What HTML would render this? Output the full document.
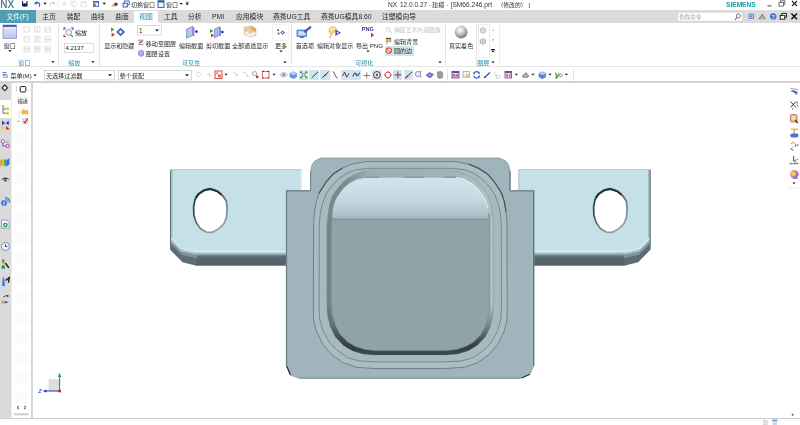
<!DOCTYPE html>
<html><head><meta charset="utf-8"><title>NX 12.0.0.27</title>
<style>
html,body{margin:0;padding:0;background:#fff;}
body{width:800px;height:425px;overflow:hidden;position:relative;font-family:"Liberation Sans",sans-serif;}
#ov{position:absolute;left:0;top:0;width:800px;height:425px;filter:blur(0.3px);}
text{font-family:"Liberation Sans","Noto Sans CJK SC",sans-serif;}
.bg{position:absolute;}
</style></head><body>
<div class="bg" style="left:0px;top:9.6px;width:800px;height:13.2px;background:#dbdbdb;"></div>
<div class="bg" style="left:0px;top:9.6px;width:36px;height:13.2px;background:#4d9db3;"></div>
<div class="bg" style="left:134px;top:10.8px;width:24px;height:12.2px;background:#ffffff;"></div>
<div class="bg" style="left:0px;top:66px;width:800px;height:1px;background:#e6e6e6;"></div>
<div class="bg" style="left:0px;top:81.2px;width:800px;height:1.8px;background:#d4d4d4;"></div>
<div class="bg" style="left:0px;top:83px;width:10.6px;height:336px;background:#dadada;"></div>
<div class="bg" style="left:0px;top:100px;width:10.6px;height:17.6px;background:#ffffff;"></div>
<div class="bg" style="left:10.8px;top:83px;width:0.8px;height:336px;background:#ececec;"></div>
<div class="bg" style="left:31.4px;top:83px;width:1.8px;height:336px;background:#d6d6d6;"></div>
<div class="bg" style="left:0px;top:418px;width:800px;height:1px;background:#cccccc;"></div>
<div class="bg" style="left:58px;top:24px;width:1px;height:42px;background:#e4e4e4;"></div>
<div class="bg" style="left:98.5px;top:24px;width:1px;height:42px;background:#e4e4e4;"></div>
<div class="bg" style="left:291px;top:24px;width:1px;height:40px;background:#e4e4e4;"></div>
<div class="bg" style="left:384.5px;top:46px;width:29px;height:9.6px;background:#cfe6ee;"></div>
<div class="bg" style="left:445px;top:24px;width:1px;height:42px;background:#e4e4e4;"></div>
<div class="bg" style="left:476px;top:24px;width:1px;height:42px;background:#e4e4e4;"></div>
<div class="bg" style="left:491.4px;top:49.3px;width:3.2px;height:0.7px;background:#222;"></div>
<div class="bg" style="left:499px;top:24px;width:1px;height:42px;background:#ececec;"></div>
<div class="bg" style="left:447px;top:69px;width:1px;height:12px;background:#e2e2e2;"></div>
<div class="bg" style="left:573px;top:69px;width:1px;height:12px;background:#e2e2e2;"></div>
<div class="bg" style="left:299px;top:70px;width:9.4px;height:9.6px;background:#cfe6ee;"></div>
<div class="bg" style="left:309.4px;top:70px;width:9.6px;height:9.6px;background:#cfe6ee;"></div>
<div class="bg" style="left:320px;top:70px;width:9.6px;height:9.6px;background:#cfe6ee;"></div>
<div class="bg" style="left:341px;top:70px;width:9.5px;height:9.6px;background:#cfe6ee;"></div>
<div class="bg" style="left:351px;top:70px;width:9.8px;height:9.6px;background:#cfe6ee;"></div>
<div class="bg" style="left:372px;top:70px;width:9.8px;height:9.6px;background:#cfe6ee;"></div>
<div class="bg" style="left:393px;top:70px;width:9px;height:9.6px;background:#cfe6ee;"></div>
<div class="bg" style="left:404px;top:70px;width:9.3px;height:9.6px;background:#cfe6ee;"></div>
<svg id="ov" width="800" height="425" viewBox="0 0 800 425">
<defs><linearGradient id="gside" x1="0" y1="0" x2="0" y2="1"><stop offset="0" stop-color="#d6e9ed"/><stop offset="0.1" stop-color="#c0d5da"/><stop offset="0.2" stop-color="#9bb0b6"/><stop offset="0.32" stop-color="#6b7e84"/><stop offset="0.42" stop-color="#58696f"/><stop offset="1" stop-color="#4f6066"/></linearGradient><linearGradient id="gtop" x1="0" y1="0" x2="0" y2="1"><stop offset="0" stop-color="#d0e6ec"/><stop offset="0.5" stop-color="#c5dbe1"/><stop offset="0.8" stop-color="#b3c9cf"/><stop offset="1" stop-color="#a3b8be"/></linearGradient><linearGradient id="ghole" x1="0.1" y1="0" x2="0.75" y2="1"><stop offset="0" stop-color="#25353b"/><stop offset="0.35" stop-color="#3a4b51"/><stop offset="0.6" stop-color="#687c82"/><stop offset="1" stop-color="#93a7ad"/></linearGradient><linearGradient id="gcx" gradientUnits="userSpaceOnUse" x1="326.8" y1="0" x2="493.8" y2="0"><stop offset="0" stop-color="#687b81"/><stop offset="0.014" stop-color="#6f8288"/><stop offset="0.03" stop-color="#86999f"/><stop offset="0.5" stop-color="#909fa5"/><stop offset="0.96" stop-color="#b1c5ca"/><stop offset="1" stop-color="#aabec4"/></linearGradient><linearGradient id="gcy" gradientUnits="userSpaceOnUse" x1="0" y1="304" x2="0" y2="352"><stop offset="0" stop-color="#2f3d43" stop-opacity="0"/><stop offset="0.4" stop-color="#2f3d43" stop-opacity="0.4"/><stop offset="0.75" stop-color="#2f3d43" stop-opacity="0.85"/><stop offset="0.92" stop-color="#2f3d43" stop-opacity="1"/><stop offset="1" stop-color="#3b4a50" stop-opacity="1"/></linearGradient><linearGradient id="gwall" gradientUnits="userSpaceOnUse" x1="326" y1="0" x2="494.6" y2="0"><stop offset="0" stop-color="#72868c"/><stop offset="0.12" stop-color="#788c92"/><stop offset="0.26" stop-color="#9bafb5"/><stop offset="0.75" stop-color="#9fb3b9"/><stop offset="0.88" stop-color="#aabec4"/><stop offset="1" stop-color="#b0c4ca"/></linearGradient><linearGradient id="gwin" x1="0" y1="0" x2="0" y2="1"><stop offset="0" stop-color="#e9effa"/><stop offset="1" stop-color="#b9c1ea"/></linearGradient><radialGradient id="gsph" cx="0.4" cy="0.3" r="0.7"><stop offset="0" stop-color="#ffffff"/><stop offset="0.45" stop-color="#cfcfcf"/><stop offset="1" stop-color="#777"/></radialGradient><linearGradient id="gnx" x1="0" y1="0" x2="0" y2="1"><stop offset="0" stop-color="#7f9bb0"/><stop offset="1" stop-color="#4d6f88"/></linearGradient></defs>
<text x="0.2" y="7.6" font-size="10" font-weight="bold" fill="#64819a">NX</text>
<text x="131" y="7.2" font-size="6" fill="#2a2a2a">切换窗口</text>
<text x="166" y="7.2" font-size="6" fill="#2a2a2a">窗口</text>
<text x="388" y="7.2" font-size="6.6" fill="#333">NX</text>
<text x="400" y="7.2" font-size="6.5" fill="#333">12.0.0.27</text>
<text x="428.6" y="7.2" font-size="6.2" fill="#333">-</text>
<text x="432" y="7.2" font-size="6.2" fill="#333">建模</text>
<text x="446.4" y="7.2" font-size="6.2" fill="#333">-</text>
<text x="450.6" y="7.2" font-size="6.6" fill="#333">[SM66.246.prt</text>
<text x="497.5" y="7.2" font-size="5.8" fill="#333">（修改的）</text>
<text x="528.2" y="7.2" font-size="6.2" fill="#333">]</text>
<text x="726" y="6.7" font-size="6.6" font-weight="bold" fill="#0a9c9c">SIEMENS</text>
<text x="6.5" y="19.2" font-size="6.8" fill="#ffffff">文件(F)</text>
<text x="42.3" y="19.2" font-size="6.8" fill="#2a2a2a">主页</text>
<text x="66.8" y="19.2" font-size="6.8" fill="#2a2a2a">装配</text>
<text x="91" y="19.2" font-size="6.8" fill="#2a2a2a">曲线</text>
<text x="115.2" y="19.2" font-size="6.8" fill="#2a2a2a">曲面</text>
<text x="164" y="19.2" font-size="6.8" fill="#2a2a2a">工具</text>
<text x="188" y="19.2" font-size="6.8" fill="#2a2a2a">分析</text>
<text x="212" y="19.2" font-size="6.8" fill="#2a2a2a">PMI</text>
<text x="236" y="19.2" font-size="6.8" fill="#2a2a2a">应用模块</text>
<text x="273" y="19.2" font-size="6.8" fill="#2a2a2a">燕秀UG工具</text>
<text x="321" y="19.2" font-size="6.8" fill="#2a2a2a">燕秀UG模具8.60</text>
<text x="382" y="19.2" font-size="6.8" fill="#2a2a2a">注塑模向导</text>
<text x="139.3" y="19.2" font-size="6.8" fill="#2b8fad">视图</text>
<rect x="677.5" y="12.3" width="65" height="9" rx="1" fill="#fff" stroke="#c9c9c9" stroke-width="0.6"/>
<text x="679" y="19" font-size="5.6" fill="#9a9a9a">查找命令</text>
<text x="3.8" y="47.6" font-size="6.05" fill="#2a2a2a">窗口</text>
<path d="M8.28 50.20 h3.45 l-1.72 1.90 z" fill="#111" stroke="none" stroke-width="1" />
<text x="18.2" y="65.1" font-size="6.05" fill="#2b8fad">窗口</text>
<path d="M51.39 61.20 h3.22 l-1.61 1.77 z" fill="#111" stroke="none" stroke-width="1" />
<text x="75" y="34.7" font-size="6.05" fill="#2a2a2a">缩放</text>
<rect x="64.3" y="43.4" width="29.5" height="9.2" fill="#fff" stroke="#c4c4c4" stroke-width="0.6"/>
<text x="65.4" y="50.4" font-size="6" fill="#222">4.2137</text>
<text x="68.3" y="65.1" font-size="6.05" fill="#2b8fad">缩放</text>
<path d="M91.39 61.20 h3.22 l-1.61 1.77 z" fill="#111" stroke="none" stroke-width="1" />
<text x="104.2" y="47.6" font-size="6.05" fill="#2a2a2a">显示和隐藏</text>
<rect x="137.4" y="25.6" width="24" height="9.4" fill="#fff" stroke="#c4c4c4" stroke-width="0.6"/>
<text x="139" y="32.9" font-size="6.4" fill="#222">1</text>
<path d="M155.04 29.40 h3.91 l-1.95 2.15 z" fill="#111" stroke="none" stroke-width="1" />
<text x="145.8" y="45.9" font-size="6.05" fill="#2a2a2a">移动至图层</text>
<text x="145.8" y="56.2" font-size="6.05" fill="#2a2a2a">图层设置</text>
<text x="179" y="47.6" font-size="6.05" fill="#2a2a2a">编辑截面</text>
<text x="206" y="47.6" font-size="6.05" fill="#2a2a2a">剪切截面</text>
<text x="232" y="47.6" font-size="6.05" fill="#2a2a2a">全部通透显示</text>
<rect x="272.4" y="24.3" width="16.6" height="16" rx="1" fill="#fff" stroke="#e2e2e2" stroke-width="0.6"/>
<text x="275" y="47.6" font-size="6.05" fill="#2a2a2a">更多</text>
<path d="M279.39 50.40 h3.22 l-1.61 1.77 z" fill="#111" stroke="none" stroke-width="1" />
<text x="182" y="65.1" font-size="6.05" fill="#2b8fad">可见性</text>
<path d="M283.39 61.40 h3.22 l-1.61 1.77 z" fill="#111" stroke="none" stroke-width="1" />
<text x="295.8" y="47.6" font-size="6.05" fill="#2a2a2a">首选项</text>
<text x="317" y="47.6" font-size="6.05" fill="#2a2a2a">编辑对象显示</text>
<text x="356" y="47.6" font-size="6.05" fill="#2a2a2a">导出 PNG</text>
<path d="M366.39 50.40 h3.22 l-1.61 1.77 z" fill="#111" stroke="none" stroke-width="1" />
<text x="361.8" y="31.2" font-size="5.6" font-weight="bold" fill="#3a2f8c">PNG</text>
<path d="M371 32.8 l3.2 2.3 l-3.2 2.3z" fill="#c0279c" stroke="none" stroke-width="1" />
<text x="394" y="32.2" font-size="5.85" fill="#c4c4c4">捕捉艺术外观图像</text>
<text x="394" y="43.6" font-size="6.05" fill="#2a2a2a">编辑背景</text>
<text x="394" y="53.3" font-size="6.05" fill="#2a2a2a">圆的边</text>
<text x="355.2" y="65.1" font-size="6.05" fill="#2b8fad">可视化</text>
<path d="M438.39 61.40 h3.22 l-1.61 1.77 z" fill="#111" stroke="none" stroke-width="1" />
<text x="449" y="47.6" font-size="6.05" fill="#2a2a2a">真实着色</text>
<rect x="478.3" y="24.4" width="11" height="33" fill="#fff" stroke="#e0e0e0" stroke-width="0.6"/>
<text x="477.2" y="65.1" font-size="6.05" fill="#2b8fad">图层</text>
<path d="M491.39 61.40 h3.22 l-1.61 1.77 z" fill="#111" stroke="none" stroke-width="1" />
<path d="M491.16 50.60 h3.68 l-1.84 2.02 z" fill="#111" stroke="none" stroke-width="1" />
<path d="M491.9 30.6 l1.1 -1.2 l1.1 1.2z" fill="#777" stroke="none" stroke-width="1" />
<path d="M491.9 39.6 l1.1 1.2 l1.1 -1.2z" fill="#777" stroke="none" stroke-width="1" />
<text x="10.5" y="77.6" font-size="6.05" fill="#2a2a2a">菜单(M)</text>
<path d="M33.39 74.40 h3.22 l-1.61 1.77 z" fill="#111" stroke="none" stroke-width="1" />
<rect x="44.3" y="70.3" width="70.3" height="9.6" fill="#fff" stroke="#bdbdbd" stroke-width="0.6"/>
<text x="46" y="77.6" font-size="6.05" fill="#2a2a2a">无选择过滤器</text>
<path d="M108.05 74.20 h3.91 l-1.95 2.15 z" fill="#111" stroke="none" stroke-width="1" />
<rect x="118.2" y="70.3" width="73.3" height="9.6" fill="#fff" stroke="#bdbdbd" stroke-width="0.6"/>
<text x="119.8" y="77.6" font-size="6.05" fill="#2a2a2a">整个装配</text>
<path d="M185.04 74.20 h3.91 l-1.95 2.15 z" fill="#111" stroke="none" stroke-width="1" />
<rect x="196.00" y="251" width="104.00" height="14.7" fill="url(#gside)"/>
<path d="M170.20 238.00 L181.00 249.00 L197.00 252.40 L196.50 265.70 L182.50 262.30 L170.40 250.00Z" fill="#5c6d73" stroke="none" stroke-width="0" />
<path d="M170.20 238.00 L181.00 249.00 L197.00 252.40 L196.80 258.20 L181.70 254.80 L170.30 243.40Z" fill="#80959b" stroke="none" stroke-width="0" />
<path d="M170.20 238.00 L181.00 249.00 L197.00 252.40 L197.00 254.40 L181.20 251.20 L170.20 240.20Z" fill="#b7ccd1" stroke="none" stroke-width="0" />
<path d="M170.00 169.40 L302.00 169.40 L302.00 251.00 L200.00 251.00 L190.00 250.40 L181.00 248.00 L170.00 237.00Z" fill="#c6e0e7" stroke="none" stroke-width="0" />
<path d="M170.40 237 L181.00 248.2 L190.00 250.8 L200.00 251.4 L300.00 251.4" fill="none" stroke="#d9edf1" stroke-width="1.1" />
<rect x="170.00" y="169.6" width="2.60" height="68" fill="#a7bfc5"/>
<line x1="170.5" y1="170.5" x2="170.5" y2="249.5" stroke="#5f777d" stroke-width="1.1" />
<line x1="170" y1="169.6" x2="302" y2="169.6" stroke="#a5bec5" stroke-width="0.7" />
<rect x="300.2" y="169.6" width="1.8" height="21.4" fill="#dcedf1"/>
<rect x="520.60" y="251" width="104.00" height="14.7" fill="url(#gside)"/>
<path d="M650.40 238.00 L639.60 249.00 L623.60 252.40 L624.10 265.70 L638.10 262.30 L650.20 250.00Z" fill="#5c6d73" stroke="none" stroke-width="0" />
<path d="M650.40 238.00 L639.60 249.00 L623.60 252.40 L623.80 258.20 L638.90 254.80 L650.30 243.40Z" fill="#80959b" stroke="none" stroke-width="0" />
<path d="M650.40 238.00 L639.60 249.00 L623.60 252.40 L623.60 254.40 L639.40 251.20 L650.40 240.20Z" fill="#b7ccd1" stroke="none" stroke-width="0" />
<path d="M650.60 169.40 L518.60 169.40 L518.60 251.00 L620.60 251.00 L630.60 250.40 L639.60 248.00 L650.60 237.00Z" fill="#c6e0e7" stroke="none" stroke-width="0" />
<path d="M650.20 237 L639.60 248.2 L630.60 250.8 L620.60 251.4 L520.60 251.4" fill="none" stroke="#d9edf1" stroke-width="1.1" />
<rect x="648.00" y="169.6" width="2.60" height="68" fill="#a7bfc5"/>
<line x1="650.1" y1="170.5" x2="650.1" y2="249.5" stroke="#5f777d" stroke-width="1.1" />
<line x1="650.6" y1="169.6" x2="518.6" y2="169.6" stroke="#a5bec5" stroke-width="0.7" />
<line x1="518.8" y1="169.6" x2="518.8" y2="191" stroke="#9fb8bf" stroke-width="0.8" />
<path d="M210.35 188.90 L217.40 191.30 L223.10 196.20 L226.40 201.20 L227.10 208.20 L226.50 217.40 L223.80 223.80 L218.80 228.70 L211.80 232.40 L206.10 232.00 L200.50 228.70 L196.20 222.40 L193.90 215.30 L193.60 206.80 L194.90 199.80 L198.40 194.10 L204.00 190.30Z" fill="#ffffff" stroke="url(#ghole)" stroke-width="1.7" stroke-linejoin="round"/>
<path d="M196.30 197.20 L198.40 194.10 L204.00 190.30 L210.35 188.90 L217.40 191.30 L221.00 194.30" fill="none" stroke="#26363c" stroke-width="2.1" stroke-linejoin="round" stroke-linecap="round"/>
<path d="M610.35 188.90 L617.40 191.30 L623.10 196.20 L626.40 201.20 L627.10 208.20 L626.50 217.40 L623.80 223.80 L618.80 228.70 L611.80 232.40 L606.10 232.00 L600.50 228.70 L596.20 222.40 L593.90 215.30 L593.60 206.80 L594.90 199.80 L598.40 194.10 L604.00 190.30Z" fill="#ffffff" stroke="url(#ghole)" stroke-width="1.7" stroke-linejoin="round"/>
<path d="M596.30 197.20 L598.40 194.10 L604.00 190.30 L610.35 188.90 L617.40 191.30 L621.00 194.30" fill="none" stroke="#26363c" stroke-width="2.1" stroke-linejoin="round" stroke-linecap="round"/>
<path d="M310.5 190.6 L310.5 171.5 L312 164.6 L315 160.8 L321 158 L499.60 158 L505.60 160.8 L508.60 164.6 L510.10 171.5 L510.10 190.6 L534 190.6 L534 365.5 L530.1 373.8 L520.5 378.3 L299.5 378.3 L290.1 375 L286.25 365.5 L286.25 190.6Z" fill="#a0b4bb" stroke="#7f949a" stroke-width="0.7" stroke-linejoin="round"/>
<line x1="286.3" y1="190.9" x2="310.5" y2="190.9" stroke="#62777d" stroke-width="0.9" />
<line x1="534" y1="190.9" x2="510.1" y2="190.9" stroke="#62777d" stroke-width="0.9" />
<line x1="310.6" y1="171" x2="310.6" y2="190.6" stroke="#6a8086" stroke-width="0.9" />
<line x1="510.0" y1="171" x2="510.0" y2="190.6" stroke="#5f757b" stroke-width="1.1" />
<line x1="286.6" y1="190.6" x2="286.6" y2="365.5" stroke="#6a7f85" stroke-width="1.1" />
<line x1="533.6" y1="190.6" x2="533.6" y2="365.5" stroke="#62767c" stroke-width="1.2" />
<line x1="299.5" y1="378.1" x2="520.5" y2="378.1" stroke="#7b8f95" stroke-width="0.8" />
<line x1="286.8" y1="366" x2="290.3" y2="374.8" stroke="#26343a" stroke-width="1.2" />
<line x1="530" y1="374.2" x2="521.5" y2="378" stroke="#26343a" stroke-width="1.1" />
<path d="M365.00 161.60 L351.60 164.20 L341.70 168.40 L333.20 174.00 L326.20 181.80 L319.10 193.10 L316.30 201.60 L314.70 211.00 L313.65 223.00 L313.40 305.00 L313.60 319.80 L316.50 331.40 L323.10 344.50 L331.40 354.40 L342.90 362.70 L356.10 367.30 L375.00 368.50 L445.60 368.50 L464.50 367.30 L477.70 362.70 L489.20 354.40 L497.50 344.50 L504.10 331.40 L507.00 319.80 L507.20 305.00 L506.95 223.00 L505.90 211.00 L504.30 201.60 L501.50 193.10 L494.40 181.80 L487.40 174.00 L478.90 168.40 L469.00 164.20 L455.60 161.60Z" fill="#a9bdc3" stroke="#6f848a" stroke-width="1.0" stroke-linejoin="round"/>
<path d="M341.70 168.40 L333.20 174.00 L326.20 181.80 L319.10 193.10" fill="none" stroke="#44575d" stroke-width="1.2" stroke-linecap="round"/>
<path d="M469.00 164.20 L478.90 168.40 L487.40 174.00 L494.40 181.80 L501.50 193.10 L504.30 201.60 L505.90 211.00" fill="none" stroke="#44575d" stroke-width="1.2" stroke-linecap="round"/>
<path d="M368.00 168.30 L355.80 169.80 L347.40 173.00 L338.90 178.60 L331.10 186.80 L326.20 193.80 L322.60 203.00 L320.30 213.00 L319.30 225.00 L319.10 305.00 L319.50 318.20 L323.10 331.40 L329.70 342.90 L337.90 351.10 L347.80 357.70 L359.40 361.00 L375.00 361.80 L445.60 361.80 L461.20 361.00 L472.80 357.70 L482.70 351.10 L490.90 342.90 L497.50 331.40 L501.10 318.20 L501.50 305.00 L501.30 225.00 L500.30 213.00 L498.00 203.00 L494.40 193.80 L489.50 186.80 L481.70 178.60 L473.20 173.00 L464.80 169.80 L452.60 168.30Z" fill="#a6bac0" stroke="#768b91" stroke-width="1.0" stroke-linejoin="round"/>
<path d="M378.00 169.00 L365.00 171.20 L354.40 174.80 L345.90 179.70 L338.90 186.80 L332.50 195.90 L329.70 204.40 L328.10 215.00 L326.90 226.00 L326.80 305.00 L327.40 314.90 L330.20 326.40 L335.20 336.80 L343.50 345.50 L352.30 350.80 L362.70 354.00 L375.00 355.00 L445.60 355.00 L457.90 354.00 L468.30 350.80 L477.10 345.50 L485.40 336.80 L490.40 326.40 L493.20 314.90 L493.80 305.00 L493.70 226.00 L492.50 215.00 L490.90 204.40 L488.10 195.90 L481.70 186.80 L474.70 179.70 L466.20 174.80 L455.60 171.20 L442.60 169.00Z" fill="url(#gcx)" stroke="#8a9fa5" stroke-width="0.5" />
<path d="M378.00 169.00 L365.00 171.20 L354.40 174.80 L345.90 179.70 L338.90 186.80 L332.50 195.90 L329.70 204.40 L328.10 215.00 L326.90 226.00 L326.80 305.00 L327.40 314.90 L330.20 326.40 L335.20 336.80 L343.50 345.50 L352.30 350.80 L362.70 354.00 L375.00 355.00 L445.60 355.00 L457.90 354.00 L468.30 350.80 L477.10 345.50 L485.40 336.80 L490.40 326.40 L493.20 314.90 L493.80 305.00 L493.70 226.00 L492.50 215.00 L490.90 204.40 L488.10 195.90 L481.70 186.80 L474.70 179.70 L466.20 174.80 L455.60 171.20 L442.60 169.00Z" fill="url(#gcy)" stroke="none" stroke-width="1" />
<path d="M378.00 169.00 L365.00 171.20 L354.40 174.80 L345.90 179.70 L338.90 186.80 L332.50 195.90 L329.70 204.40 L328.10 215.00 L326.90 226.00 L493.70 226.00 L492.50 215.00 L490.90 204.40 L488.10 195.90 L481.70 186.80 L474.70 179.70 L466.20 174.80 L455.60 171.20 L442.60 169.00Z" fill="url(#gwall)" stroke="none" stroke-width="1" />
<path d="M365.00 171.20 L354.40 174.80 L345.90 179.70 L338.90 186.80 L332.50 195.90 L329.70 204.40 L328.10 215.00 L326.90 226.00" fill="none" stroke="#83989e" stroke-width="0.6" />
<path d="M455.60 171.20 L466.20 174.80 L474.70 179.70 L481.70 186.80 L488.10 195.90 L490.90 204.40 L492.50 215.00 L493.70 226.00" fill="none" stroke="#8a9fa5" stroke-width="0.6" />
<path d="M331.40 214.00 L331.50 305.00 L332.30 314.50 L335.40 325.60 L340.20 334.60 L347.60 342.00 L355.40 346.60 L364.60 349.60 L376.00 350.70 L445.20 350.70 L456.60 349.60 L465.80 346.60 L473.60 342.00 L481.00 334.60 L485.80 325.60 L488.90 314.50 L489.70 305.00 L489.80 214.00Z" fill="#8fa3a9" stroke="#6c7f85" stroke-width="0.5" stroke-linejoin="round"/>
<path d="M334.50 219.20 L332.40 217.00 L332.80 208.00 L335.00 200.50 L337.30 196.50 L343.00 188.50 L349.50 183.00 L357.50 178.80 L365.00 177.60 L455.60 177.60 L463.10 178.80 L471.10 183.00 L477.60 188.50 L483.30 196.50 L485.60 200.50 L487.80 208.00 L488.20 217.00 L486.10 219.20Z" fill="url(#gtop)" stroke="none" stroke-width="0" />
<path d="M487.80 208.00 L485.60 200.50 L483.30 196.50 L477.60 188.50 L471.10 183.00 L463.10 178.80 L455.60 177.60" fill="none" stroke="#e6f2f5" stroke-width="0.9" />
<path d="M332.80 208.00 L335.00 200.50 L337.30 196.50 L343.00 188.50 L349.50 183.00 L357.50 178.80 L365.00 177.60" fill="none" stroke="#7f949a" stroke-width="0.5" />
<line x1="365" y1="177.3" x2="455.6" y2="177.3" stroke="#9db2b8" stroke-width="0.7" />
<line x1="365" y1="177.2" x2="455.6" y2="177.2" stroke="#6f848a" stroke-width="0.8" stroke-dasharray="14 25 20 20 12 100"/>
<line x1="332" y1="219.3" x2="488.6" y2="219.3" stroke="#798d93" stroke-width="1.1" />
<line x1="18.5" y1="0.5" x2="18.5" y2="9" stroke="#ececec" stroke-width="0.7" />
<g transform="translate(22 1) scale(1)"><rect x="0" y="0" width="5.6" height="5.4" fill="#1b2d6e" stroke="none" stroke-width="1" rx="0"/><rect x="1.1" y="0" width="3.3" height="2.3" fill="#ffffff" stroke="none" stroke-width="1" rx="0"/><rect x="1.5" y="3.6" width="2.6" height="1.8" fill="#0d173d" stroke="none" stroke-width="1" rx="0"/></g>
<g transform="translate(33.8 1.2) scale(1)"><path d="M5.6 5 C6.6 2.2 4.6 0.6 2.2 1.6" fill="none" stroke="#2f6fd3" stroke-width="1.3" stroke-linecap="round"/><path d="M0 2.4 L3 0 L3.2 3.6Z" fill="#2f6fd3" stroke="none" stroke-width="1" /></g>
<path d="M43.27 2.80 h3.45 l-1.72 1.90 z" fill="#111" stroke="none" stroke-width="1" />
<g transform="translate(50 1.2) scale(1)"><path d="M0.4 5 C-0.6 2.2 1.4 0.6 3.8 1.6" fill="none" stroke="#d2d2d2" stroke-width="1.1" stroke-linecap="round"/><path d="M6 2.4 L3 0 L2.8 3.6Z" fill="#d2d2d2" stroke="none" stroke-width="1" /></g>
<line x1="58.3" y1="0.5" x2="58.3" y2="9" stroke="#e6e6e6" stroke-width="0.7" />
<g transform="translate(62 1.5) scale(1)"><path d="M2.2 0 V4.6 M0 2.3 H4.4" fill="none" stroke="#dcdcdc" stroke-width="1" /></g>
<g transform="translate(71 1) scale(1)"><rect x="0" y="0" width="3.4" height="4.2" fill="none" stroke="#dedede" stroke-width="0.8" rx="0"/><rect x="1.8" y="1.6" width="3.4" height="4.2" fill="#fff" stroke="#dedede" stroke-width="0.8" rx="0"/></g>
<g transform="translate(81 1) scale(1)"><rect x="0" y="1.2" width="5" height="4.6" fill="none" stroke="#dedede" stroke-width="0.8" rx="0"/><rect x="1.4" y="0" width="2.4" height="1.6" fill="#e4e4e4" stroke="none" stroke-width="1" rx="0"/></g>
<g transform="translate(93 1) scale(1)"><rect x="0" y="0" width="6" height="6" fill="#3c5fc0" stroke="none" stroke-width="1" rx="0"/><rect x="0.8" y="1.6" width="4.4" height="3.6" fill="#eef1fb" stroke="none" stroke-width="1" rx="0"/><rect x="0.8" y="2.6" width="2" height="2.6" fill="#d9534a" stroke="none" stroke-width="1" rx="0"/></g>
<path d="M102.48 2.80 h3.45 l-1.72 1.90 z" fill="#111" stroke="none" stroke-width="1" />
<g transform="translate(111.5 1.5) scale(1)"><path d="M0 4.5 L3 1 L6.5 3.4 L3 5.2Z" fill="#e9a23c" stroke="none" stroke-width="1" /><circle cx="4.6" cy="2.6" r="1.6" fill="#2d3fa5" stroke="none" stroke-width="1"/></g>
<g transform="translate(123 1) scale(1)"><rect x="1.6" y="0" width="4.6" height="3.8" fill="#fff" stroke="#3558b8" stroke-width="0.9" rx="0"/><rect x="0" y="2.2" width="4.4" height="3.8" fill="#e8eefc" stroke="#3558b8" stroke-width="0.9" rx="0"/></g>
<g transform="translate(158 0.8) scale(1)"><rect x="0" y="0" width="6" height="6.6" fill="#eef2fc" stroke="#2f4fb0" stroke-width="0.9" rx="0"/><rect x="0" y="0" width="6" height="1.6" fill="#2f4fb0" stroke="none" stroke-width="1" rx="0"/></g>
<path d="M179.59 3.00 h3.22 l-1.61 1.77 z" fill="#111" stroke="none" stroke-width="1" />
<path d="M185.47 3.30 h3.45 l-1.72 1.90 z" fill="#111" stroke="none" stroke-width="1" />
<line x1="185.8" y1="2.2" x2="188.6" y2="2.2" stroke="#222" stroke-width="0.7" />
<line x1="767.5" y1="5.9" x2="771.5" y2="5.9" stroke="#333" stroke-width="0.9" />
<g transform="translate(779 0.8) scale(1)"><rect x="1.5" y="0" width="4.4" height="3.6" fill="none" stroke="#555" stroke-width="0.8" rx="0"/><rect x="0" y="1.7" width="4.4" height="3.6" fill="#fff" stroke="#555" stroke-width="0.8" rx="0"/></g>
<g transform="translate(792 1) scale(1)"><path d="M0 0 L5 5 M5 0 L0 5" fill="none" stroke="#222" stroke-width="1.1" /></g>
<g transform="translate(735 13.5) scale(1)"><circle cx="3.4" cy="2.4" r="2" fill="none" stroke="#666" stroke-width="0.9"/><path d="M2 4 L0 6.4" fill="none" stroke="#666" stroke-width="1.1" /></g>
<g transform="translate(747.6 12.6) scale(1)"><rect x="0" y="0" width="7.4" height="7.6" fill="#e9e9e9" stroke="#c9c9c9" stroke-width="0.6" rx="1"/><rect x="1.6" y="1.6" width="4.2" height="4.2" fill="none" stroke="#3d6fcf" stroke-width="0.9" rx="0"/><rect x="2.8" y="2.8" width="1.8" height="1.8" fill="#3d6fcf" stroke="none" stroke-width="1" rx="0"/></g>
<g transform="translate(759 13.6) scale(1)"><path d="M0 5.6 L3.2 1 L6.4 5.6" fill="none" stroke="#7a7a7a" stroke-width="1.1" /><path d="M1.8 5.6 L3.2 3.6 L4.6 5.6" fill="none" stroke="#7a7a7a" stroke-width="0.8" /></g>
<g transform="translate(770 13) scale(1)"><circle cx="3.2" cy="3.4" r="3.2" fill="#2f63d6" stroke="none" stroke-width="1"/><circle cx="3.2" cy="3.4" r="3.2" fill="none" stroke="#9cb8f0" stroke-width="0.5"/><text x="3.2" y="5.6" font-size="5.6" font-weight="bold" fill="#fff" text-anchor="middle">?</text></g>
<g transform="translate(780.2 13.4) scale(1)"><rect x="1.6" y="0" width="4.6" height="3.8" fill="#fff" stroke="#222" stroke-width="1" rx="0"/><rect x="0" y="2" width="4.6" height="3.8" fill="#fff" stroke="#222" stroke-width="1" rx="0"/></g>
<g transform="translate(791.4 13.4) scale(1)"><path d="M0 0 L5.6 5.8 M5.6 0 L0 5.8" fill="none" stroke="#111" stroke-width="1.5" /></g>
<g transform="translate(3 25) scale(1)"><rect x="0" y="0" width="13.4" height="13.4" fill="url(#gwin)" stroke="#7e8fd0" stroke-width="0.7" rx="0"/><rect x="0" y="0" width="13.4" height="1.8" fill="#3b55a8" stroke="none" stroke-width="1" rx="0"/></g>
<g transform="translate(24.0 26.8) scale(1)"><rect x="0" y="0" width="5.6" height="5.2" fill="#fbfbfb" stroke="#cfcfcf" stroke-width="0.6" rx="0"/></g>
<g transform="translate(34.4 26.8) scale(1)"><rect x="0" y="0" width="5.6" height="5.2" fill="#fbfbfb" stroke="#cfcfcf" stroke-width="0.6" rx="0"/><path d="M2.8 0 V5.2" fill="none" stroke="#cfcfcf" stroke-width="0.6" /></g>
<g transform="translate(44.8 26.8) scale(1)"><rect x="0" y="0" width="5.6" height="5.2" fill="#fbfbfb" stroke="#cfcfcf" stroke-width="0.6" rx="0"/><path d="M0 2.6 H5.6" fill="none" stroke="#cfcfcf" stroke-width="0.6" /></g>
<g transform="translate(24.0 36.8) scale(1)"><rect x="0" y="0" width="5.6" height="5.2" fill="#fbfbfb" stroke="#cfcfcf" stroke-width="0.6" rx="0"/><path d="M2.8 1 V4.2" fill="none" stroke="#d6d6d6" stroke-width="0.6" /></g>
<g transform="translate(34.4 36.8) scale(1)"><rect x="0" y="0" width="5.6" height="5.2" fill="#fbfbfb" stroke="#cfcfcf" stroke-width="0.6" rx="0"/><path d="M2.8 0 V5.2" fill="none" stroke="#cfcfcf" stroke-width="0.6" /><path d="M2.8 1 V4.2" fill="none" stroke="#d6d6d6" stroke-width="0.6" /></g>
<g transform="translate(44.8 36.8) scale(1)"><rect x="0" y="0" width="5.6" height="5.2" fill="#fbfbfb" stroke="#cfcfcf" stroke-width="0.6" rx="0"/><path d="M0 2.6 H5.6" fill="none" stroke="#cfcfcf" stroke-width="0.6" /><path d="M2.8 1 V4.2" fill="none" stroke="#d6d6d6" stroke-width="0.6" /></g>
<g transform="translate(24.0 46.8) scale(1)"><rect x="0" y="0" width="5.6" height="5.2" fill="#fbfbfb" stroke="#cfcfcf" stroke-width="0.6" rx="0"/><path d="M2.8 1 V4.2" fill="none" stroke="#d6d6d6" stroke-width="0.6" /><path d="M0 2 H5.6" fill="none" stroke="#d2d2d2" stroke-width="0.6" /></g>
<g transform="translate(34.4 46.8) scale(1)"><rect x="0" y="0" width="5.6" height="5.2" fill="#fbfbfb" stroke="#cfcfcf" stroke-width="0.6" rx="0"/><path d="M2.8 0 V5.2" fill="none" stroke="#cfcfcf" stroke-width="0.6" /><path d="M2.8 1 V4.2" fill="none" stroke="#d6d6d6" stroke-width="0.6" /><path d="M0 2 H5.6" fill="none" stroke="#d2d2d2" stroke-width="0.6" /></g>
<g transform="translate(44.8 46.8) scale(1)"><rect x="0" y="0" width="5.6" height="5.2" fill="#fbfbfb" stroke="#cfcfcf" stroke-width="0.6" rx="0"/><path d="M0 2.6 H5.6" fill="none" stroke="#cfcfcf" stroke-width="0.6" /><path d="M2.8 1 V4.2" fill="none" stroke="#d6d6d6" stroke-width="0.6" /><path d="M0 2 H5.6" fill="none" stroke="#d2d2d2" stroke-width="0.6" /></g>
<g transform="translate(64 28) scale(1)"><path d="M0 2 V0 H2 M7 0 H9 V2" fill="none" stroke="#2d4fb8" stroke-width="1.1" /><path d="M0 6.5 V8.5 H2" fill="none" stroke="#c23b3b" stroke-width="1.1" /><circle cx="4.6" cy="4.4" r="2.9" fill="#eef3fb" stroke="#7d8da8" stroke-width="0.9"/><path d="M6.6 6.6 L9 9" fill="none" stroke="#6d7d98" stroke-width="1.3" /></g>
<g transform="translate(111 27) scale(1)"><path d="M0 0.5 L3.4 2.6 L0 4.8Z" fill="#2ea043" stroke="none" stroke-width="1" /><path d="M0.6 5.6 L4 7.8 L0.6 10Z" fill="#d23b3b" stroke="none" stroke-width="1" /><path d="M5.2 5 L9.6 0.8 L14 5 L9.6 9.2Z" fill="#3f58c2" stroke="none" stroke-width="1" /><path d="M7.6 5 L9.6 3 L11.6 5 L9.6 7Z" fill="#e9edfb" stroke="none" stroke-width="1" /></g>
<g transform="translate(138 39) scale(1)"><path d="M0 1.2 H5.4" fill="none" stroke="#8a8a8a" stroke-width="1" /><path d="M0.4 5.4 H5.6" fill="none" stroke="#8a8a8a" stroke-width="1" /><path d="M1 3.8 L4.6 2.4" fill="none" stroke="#d0342c" stroke-width="1.4" /></g>
<g transform="translate(138 50) scale(1)"><path d="M0.6 1.6 L3.4 0 L5.6 1.4 V5.2 L2.8 6.4 L0.6 5Z" fill="#aeb4ea" stroke="#6f74c8" stroke-width="0.7" /></g>
<g transform="translate(186 26) scale(1)"><path d="M0.6 3.2 L6.6 0.4 V9.6 L0.6 12Z" fill="#b9c6ee" stroke="#5c6fc0" stroke-width="0.7" /><path d="M6.6 0.4 L8.4 1.4 V10.4 L6.6 9.6Z" fill="#7f8fd6" stroke="none" stroke-width="1" /><circle cx="10.4" cy="5.6" r="1.4" fill="#3a34a8" stroke="none" stroke-width="1"/></g>
<g transform="translate(210 26) scale(1)"><path d="M0 3 L3.4 5 L0 7Z" fill="#2ea043" stroke="none" stroke-width="1" /><path d="M1 7.6 L4.4 9.6 L1 11.6Z" fill="#d23b3b" stroke="none" stroke-width="1" /><path d="M4.4 3.2 L9.6 0.6 V9.4 L4.4 12Z" fill="#a8b8ec" stroke="#5c6fc0" stroke-width="0.6" /><path d="M9.6 0.6 L11 1.4 V10.2 L9.6 9.4Z" fill="#7f8fd6" stroke="none" stroke-width="1" /><circle cx="12.4" cy="6" r="1.3" fill="#2b2aa0" stroke="none" stroke-width="1"/></g>
<g transform="translate(244 26) scale(1)"><path d="M0 1.2 L7 0 L12 2.4 V9.4 L5.6 11 L0 8.2Z" fill="#ecc9a0" stroke="#d9b080" stroke-width="0.5" /><path d="M0.8 5.2 L5.8 7.4 L11.4 6 V9 L5.6 10.6 L0.8 8Z" fill="#f6f1ea" stroke="none" stroke-width="1" /><path d="M7 0 L12 2.4 V6 L7 4Z" fill="#e2a862" stroke="none" stroke-width="1" /></g>
<g transform="translate(277 29) scale(1)"><circle cx="1.2" cy="1.2" r="1.1" fill="#2ea043" stroke="none" stroke-width="1"/><circle cx="1.6" cy="4.6" r="1.1" fill="#d23b3b" stroke="none" stroke-width="1"/><path d="M3.2 3.6 L5.6 1.4 L8 3.6 L5.6 5.8Z" fill="#4a62c8" stroke="none" stroke-width="1" /><path d="M4.8 3.6 L5.6 2.8 L6.4 3.6 L5.6 4.4Z" fill="#fff" stroke="none" stroke-width="1" /></g>
<g transform="translate(297 26) scale(1)"><rect x="0" y="4" width="9.6" height="6.6" fill="#6aa0e8" stroke="#3566b8" stroke-width="0.7" rx="0.6"/><rect x="1.2" y="5.2" width="7.2" height="4.2" fill="#c9e0fb" stroke="none" stroke-width="1" rx="0"/><rect x="3" y="10.6" width="3.6" height="1.4" fill="#3566b8" stroke="none" stroke-width="1" rx="0"/><path d="M6.4 5.6 L12 0.8 L13.6 2.4 L8 7Z" fill="#4a58c8" stroke="none" stroke-width="1" /><path d="M12 0.8 L13 0 L14.4 1.4 L13.6 2.4Z" fill="#28307a" stroke="none" stroke-width="1" /></g>
<g transform="translate(328 26) scale(1)"><path d="M1 4 C1 1 5 0 7.4 1.4 C10 3 8.4 6 6 6.4 C4.6 6.8 5 8.4 3.6 8.2 C1.6 7.8 1 6 1 4Z" fill="#f3d67a" stroke="#d7b04a" stroke-width="0.6" /><circle cx="3.2" cy="3.2" r="0.9" fill="#fff" stroke="none" stroke-width="1"/><circle cx="5.8" cy="2.6" r="0.9" fill="#fff" stroke="none" stroke-width="1"/><path d="M3.6 8 L1.6 12" fill="none" stroke="#e0c060" stroke-width="1.6" /><path d="M7.4 3.6 L13 6.8 L7.4 10Z" fill="#4452c4" stroke="none" stroke-width="1" /><path d="M9 5.8 L11 6.8 L9 7.8Z" fill="#fff" stroke="none" stroke-width="1" /></g>
<g transform="translate(386 27) scale(1)"><circle cx="2.2" cy="2.2" r="1.9" fill="none" stroke="#c9c9c9" stroke-width="0.8"/><path d="M3.6 3.6 L5.6 5.6" fill="none" stroke="#c9c9c9" stroke-width="1" /></g>
<g transform="translate(386 38) scale(1)"><path d="M0.2 0.6 H4.8 V3.6 H0.2Z" fill="#e6c34a" stroke="#8a7420" stroke-width="0.5" /><path d="M0 0.3 H5 " fill="none" stroke="#333" stroke-width="0.9" /><path d="M1.4 3.6 L0.6 6.2" fill="none" stroke="#caa83a" stroke-width="1.2" /></g>
<g transform="translate(386 47.6) scale(1)"><circle cx="2.8" cy="3" r="2.6" fill="#fff" stroke="#d2452f" stroke-width="1.1"/><path d="M1 1.6 L4.6 4.6" fill="none" stroke="#e08a2c" stroke-width="1.2" /></g>
<g transform="translate(455 26) scale(1)"><circle cx="6.2" cy="6.2" r="6.1" fill="url(#gsph)" stroke="#8a8a8a" stroke-width="0.4"/></g>
<g transform="translate(480 27) scale(1)"><path d="M0.4 2 L3 0.4 L5.6 2 V5 L3 6.4 L0.4 5Z" fill="#e4ebf0" stroke="#8fa3ad" stroke-width="0.6" /><path d="M0.4 2 L3 3.4 L5.6 2 M3 3.4 V6.4" fill="none" stroke="#8fa3ad" stroke-width="0.5" /></g>
<g transform="translate(480 38) scale(1)"><path d="M0.4 2 L3 0.4 L5.6 2 V5 L3 6.4 L0.4 5Z" fill="#dfe8ee" stroke="#7f95a1" stroke-width="0.6" /><path d="M1 1.4 L5 5.4 M5 1.4 L1 5.4" fill="none" stroke="#7f95a1" stroke-width="0.5" /></g>
<g transform="translate(2.5 72) scale(1)"><path d="M0 0.6 H4 M0 2.4 H4" fill="none" stroke="#4a6fc0" stroke-width="0.9" /><path d="M1 3.2 H5 V5.4 H1Z" fill="#e9eefb" stroke="#5b78c0" stroke-width="0.6" /></g>
<g transform="translate(196 72) scale(1)"><circle cx="2.4" cy="2.4" r="2.2" fill="none" stroke="#d8d8d8" stroke-width="0.8"/></g>
<g transform="translate(207 72) scale(1)"><path d="M0 2 L4 3 M2 0.6 L3 5.6" fill="none" stroke="#d0d0d0" stroke-width="0.8" /></g>
<g transform="translate(215 71) scale(1)"><rect x="0" y="0" width="7" height="7.6" fill="#fff" stroke="#d04a42" stroke-width="1" rx="0"/><rect x="0.8" y="0.8" width="2.6" height="2.6" fill="#f0a8a0" stroke="none" stroke-width="1" rx="0"/><rect x="3" y="3.4" width="3" height="3" fill="#e86a60" stroke="none" stroke-width="1" rx="0"/></g>
<path d="M224.39 73.80 h3.22 l-1.61 1.77 z" fill="#111" stroke="none" stroke-width="1" />
<g transform="translate(232 71.6) scale(1)"><path d="M0.6 1.6 C3 0 5 1.6 4.6 4.4 M4.6 4.4 L3 3.6 M4.6 4.4 L5.6 2.8" fill="none" stroke="#cfcfcf" stroke-width="0.9" /></g>
<g transform="translate(242 71.6) scale(1)"><path d="M0.4 1.4 C3 0 5.4 1.6 5.4 5.4 M5.4 5.4 L4.2 4 M5.4 5.4 L6.2 3.8" fill="none" stroke="#cfcfcf" stroke-width="0.9" /></g>
<g transform="translate(252 71) scale(1)"><circle cx="2.6" cy="2.6" r="2.2" fill="#f4f4f4" stroke="#9a9a9a" stroke-width="0.8"/><path d="M4.2 4.2 L6 6" fill="none" stroke="#8a8a8a" stroke-width="1" /><circle cx="5.2" cy="6" r="1.3" fill="#b02a2a" stroke="none" stroke-width="1"/></g>
<g transform="translate(262 71) scale(1)"><rect x="0.4" y="0.4" width="6.6" height="6.6" fill="#fff" stroke="#d25a5a" stroke-width="0.9" rx="0"/><path d="M0.4 0.4 h1.4 M5.6 0.4 h1.4 M0.4 7 h1.4 M5.6 7 h1.4" fill="none" stroke="#a01f1f" stroke-width="1.2" /></g>
<path d="M272.39 73.80 h3.22 l-1.61 1.77 z" fill="#111" stroke="none" stroke-width="1" />
<g transform="translate(280 72) scale(1)"><path d="M0 2.8 C2 0 5.4 0 7.4 2.8 C5.4 5.6 2 5.6 0 2.8Z" fill="#ececf4" stroke="#8a8fa8" stroke-width="0.7" /><circle cx="3.7" cy="2.8" r="1.4" fill="#7a7fb8" stroke="none" stroke-width="1"/></g>
<g transform="translate(290 71.4) scale(1)"><path d="M0 2 L3.2 0.4 L6.6 2 V5.6 L3.4 7.2 L0 5.6Z" fill="#5f9ae8" stroke="#3a6fc0" stroke-width="0.5" /><path d="M0 2 L3.4 3.6 L6.6 2 L3.2 0.4Z" fill="#b9d7fb" stroke="none" stroke-width="1" /></g>
<g transform="translate(300 71) scale(1)"><path d="M1 1.2 L6.6 6.6 M6.6 1.2 L1 6.6" fill="none" stroke="#333" stroke-width="0.8" /><circle cx="1" cy="1.2" r="0.9" fill="#1f8f3a" stroke="none" stroke-width="1"/><circle cx="6.6" cy="1.2" r="0.9" fill="#1f8f3a" stroke="none" stroke-width="1"/><circle cx="1" cy="6.6" r="0.9" fill="#1f8f3a" stroke="none" stroke-width="1"/><circle cx="6.6" cy="6.6" r="0.9" fill="#1f8f3a" stroke="none" stroke-width="1"/><circle cx="3.8" cy="3.9" r="1.1" fill="#e6d21f" stroke="none" stroke-width="1"/></g>
<g transform="translate(311 71) scale(1)"><path d="M0.6 7 L7 0.8" fill="none" stroke="#333" stroke-width="1" /></g>
<g transform="translate(321.5 71) scale(1)"><path d="M0.6 7 L7 0.8" fill="none" stroke="#333" stroke-width="1" /><circle cx="3.8" cy="3.9" r="1" fill="#d02a2a" stroke="none" stroke-width="1"/></g>
<g transform="translate(332 71) scale(1)"><path d="M0.6 0.6 C3.4 1 2.4 6.6 5.8 7" fill="none" stroke="#a03a3a" stroke-width="1" /></g>
<g transform="translate(342 71) scale(1)"><path d="M0.4 5 L2.6 1.6 L4.6 5.8 L7.2 2.4" fill="none" stroke="#2f3fa8" stroke-width="1" /><circle cx="2.6" cy="1.8" r="0.9" fill="#d02a2a" stroke="none" stroke-width="1"/><circle cx="4.6" cy="5.6" r="0.9" fill="#d02a2a" stroke="none" stroke-width="1"/></g>
<g transform="translate(352.4 71) scale(1)"><path d="M0.4 5.6 C2 1 3.4 1.4 4 3.8 C4.6 5.6 6 4.6 7.2 1.6" fill="none" stroke="#2f3fa8" stroke-width="1.1" /><circle cx="4" cy="3.8" r="0.9" fill="#d02a2a" stroke="none" stroke-width="1"/></g>
<g transform="translate(363 71) scale(1)"><path d="M0.4 4.6 H7 M3.7 1.4 V7.4" fill="none" stroke="#8a6a5a" stroke-width="0.9" /></g>
<g transform="translate(373 71) scale(1)"><circle cx="3.9" cy="3.9" r="3.3" fill="#fff" stroke="#333" stroke-width="1"/><circle cx="3.9" cy="3.9" r="1.3" fill="#d02a2a" stroke="none" stroke-width="1"/></g>
<g transform="translate(384 71) scale(1)"><circle cx="3.9" cy="3.9" r="2.9" fill="#fff" stroke="#d23b2b" stroke-width="0.9"/><path d="M3.9 0 V1.4 M3.9 6.4 V7.8 M0 3.9 H1.4 M6.4 3.9 H7.8" fill="none" stroke="#d23b2b" stroke-width="0.8" /></g>
<g transform="translate(394 71) scale(1)"><path d="M0.4 3.9 H7.4 M3.9 0.4 V7.4" fill="none" stroke="#7a3a5a" stroke-width="1" /></g>
<g transform="translate(405 71) scale(1)"><path d="M0.6 7 L7 0.8" fill="none" stroke="#333" stroke-width="1" /><path d="M0.6 7 L3 4.6" fill="none" stroke="#d02a2a" stroke-width="1.4" /></g>
<g transform="translate(415 71) scale(1)"><circle cx="3" cy="3" r="2.6" fill="#eef3fb" stroke="#5f7fc0" stroke-width="0.8"/><path d="M4.8 4.8 L6.6 6.8" fill="none" stroke="#8a8a8a" stroke-width="1" /><path d="M5 1 L6.6 0" fill="none" stroke="#c04a3a" stroke-width="0.8" /></g>
<g transform="translate(426 71.6) scale(1)"><path d="M0 3.6 L3.6 0.8 L7.6 3 L4 6.4Z" fill="#6a62c8" stroke="#4a42a0" stroke-width="0.5" /><path d="M2 3.6 L3.8 2.2 L5.6 3.4 L3.8 5Z" fill="#a9a4e8" stroke="none" stroke-width="1" /></g>
<g transform="translate(437 71) scale(1)"><path d="M0.4 1 L3.6 0.2 L5.6 1.4 V6.8 L2.4 7.4 L0.4 6.2Z" fill="#9a9a9a" stroke="#777" stroke-width="0.5" /></g>
<g transform="translate(452 71) scale(1)"><rect x="0" y="0.4" width="7" height="6.6" fill="#e9eefb" stroke="#3a55b0" stroke-width="0.9" rx="0"/><rect x="0" y="0.4" width="7" height="1.6" fill="#3a55b0" stroke="none" stroke-width="1" rx="0"/><path d="M1.2 6 V3.6 H2.8 V6 M4.2 6 V3.6 H5.8 V6" fill="none" stroke="#d0342c" stroke-width="0.9" /></g>
<g transform="translate(463 71) scale(1)"><rect x="0" y="0.6" width="6.4" height="5.6" fill="#f4f4f4" stroke="#9aa0b8" stroke-width="0.8" rx="0"/><rect x="3.2" y="3.2" width="3" height="2.6" fill="#f0d9a0" stroke="#c9a85a" stroke-width="0.5" rx="0"/></g>
<g transform="translate(473 71) scale(1)"><path d="M6.6 3 A3 3 0 0 0 1 2.4 M0.8 4.8 A3 3 0 0 0 6.4 5.4" fill="none" stroke="#3a62c8" stroke-width="1.3" /><path d="M0 1.4 L2.4 2 L0.8 3.8Z" fill="#3a62c8" stroke="none" stroke-width="1" /><path d="M7.4 6.4 L5 5.8 L6.6 4Z" fill="#3a62c8" stroke="none" stroke-width="1" /></g>
<g transform="translate(484 72) scale(1)"><path d="M0.4 5.6 L6 0.6" fill="none" stroke="#3a52c0" stroke-width="1.4" /><path d="M0 6.2 L2 5.6 L0.8 4.4Z" fill="#222" stroke="none" stroke-width="1" /></g>
<g transform="translate(494 71) scale(1)"><path d="M1 0.6 V4.6 H4 M2.6 3 V7.4 H5.6 V4" fill="none" stroke="#cfcfcf" stroke-width="0.9" /></g>
<g transform="translate(505 71) scale(1)"><rect x="0" y="0.4" width="6.6" height="6.6" fill="#e9eefb" stroke="#3a55b0" stroke-width="0.8" rx="0"/><rect x="0" y="0.4" width="6.6" height="1.5" fill="#3a55b0" stroke="none" stroke-width="1" rx="0"/><rect x="1" y="2.8" width="2" height="3.4" fill="#e07a72" stroke="none" stroke-width="1" rx="0"/><rect x="3.8" y="2.8" width="2" height="3.4" fill="#e07a72" stroke="none" stroke-width="1" rx="0"/></g>
<path d="M514.79 73.80 h3.22 l-1.61 1.77 z" fill="#111" stroke="none" stroke-width="1" />
<g transform="translate(522 71.6) scale(1)"><path d="M0.6 5.6 C0 3.6 1.6 2.6 2.6 3 C2.4 1 5 0.4 5.2 2.8 C7 3 7 5.6 5.6 5.8Z" fill="#b0b0b0" stroke="#6a6a6a" stroke-width="0.6" /></g>
<path d="M531.39 73.80 h3.22 l-1.61 1.77 z" fill="#111" stroke="none" stroke-width="1" />
<g transform="translate(539 71.4) scale(1)"><path d="M0 2 L3.2 0.4 L6.6 2 V5.6 L3.4 7.2 L0 5.6Z" fill="#6f86e0" stroke="#3a4fb0" stroke-width="0.5" /><path d="M0 2 L3.4 3.6 L6.6 2 L3.2 0.4Z" fill="#c2ccf6" stroke="none" stroke-width="1" /><path d="M3.4 3.6 V7.2" fill="none" stroke="#3a4fb0" stroke-width="0.5" /></g>
<path d="M548.39 73.80 h3.22 l-1.61 1.77 z" fill="#111" stroke="none" stroke-width="1" />
<g transform="translate(555 72) scale(1)"><path d="M0.4 0.6 L2 5.6 L3.6 1.6" fill="none" stroke="#2e9a3a" stroke-width="1.1" /><path d="M0.2 5.8 H2" fill="none" stroke="#d02a2a" stroke-width="1" /><path d="M3.6 3.4 L5.4 1.6 L7.2 3.4 L5.4 5.2Z" fill="#fff" stroke="#3a4fb8" stroke-width="0.8" /></g>
<path d="M564.79 73.80 h3.22 l-1.61 1.77 z" fill="#111" stroke="none" stroke-width="1" />
<g transform="translate(1.6 84.6) scale(1)"><path d="M3.2 0.4 L6 3.2 L3.2 6 L0.4 3.2Z" fill="#fff" stroke="#222" stroke-width="1.1" stroke-linejoin="round"/></g>
<g transform="translate(1 104.6) scale(1)"><circle cx="2" cy="1.8" r="1.5" fill="#e9c22a" stroke="none" stroke-width="1"/><circle cx="6.8" cy="4.2" r="1.5" fill="#e9c22a" stroke="none" stroke-width="1"/><circle cx="6.6" cy="8.6" r="1.5" fill="#e9c22a" stroke="none" stroke-width="1"/><path d="M2 3.4 V8.6 H5 M2 4.4 H5" fill="none" stroke="#4a55c8" stroke-width="0.9" /></g>
<g transform="translate(1.2 120.4) scale(1)"><path d="M0.8 0.4 L4 2.6 L0.8 4.8Z" fill="#2a3fc0" stroke="none" stroke-width="1" /><path d="M7.6 0.4 L4.4 2.6 L7.6 4.8Z" fill="#2a3fc0" stroke="none" stroke-width="1" /><circle cx="2" cy="7.4" r="1.7" fill="#f0d63a" stroke="none" stroke-width="1"/><path d="M5 5.6 L8.6 9.2 H5Z" fill="#c81f1f" stroke="none" stroke-width="1" /></g>
<g transform="translate(1 139.6) scale(1)"><circle cx="1.8" cy="1.8" r="1.7" fill="#fff" stroke="#a83aa8" stroke-width="0.9"/><circle cx="6.6" cy="6.4" r="1.7" fill="#f4e0f4" stroke="#a83aa8" stroke-width="0.9"/><path d="M1.8 3.6 V6.4 H4.8" fill="none" stroke="#4a55c8" stroke-width="0.9" /><path d="M4.6 2.4 H8" fill="none" stroke="#777" stroke-width="0.7" /></g>
<g transform="translate(0.4 158) scale(1)"><path d="M0 2.4 L1.8 0.8 V7 L0 8.4Z" fill="#e8872a" stroke="none" stroke-width="1" /><path d="M1.8 2.2 L3.8 0.6 V7 L1.8 8.4Z" fill="#e8c22a" stroke="none" stroke-width="1" /><path d="M3.8 2.2 L5.8 0.6 V7 L3.8 8.4Z" fill="#3aa83a" stroke="none" stroke-width="1" /><path d="M5.8 2.4 L9 0 V6.4 L5.8 8.4Z" fill="#3a6fd8" stroke="none" stroke-width="1" /></g>
<g transform="translate(1 176.6) scale(1)"><path d="M0 3.6 C2 0 6.6 0 8.6 3.6 C7 2 1.6 2 0 3.6Z" fill="#3a3a3a" stroke="none" stroke-width="1" /><circle cx="4.3" cy="3.6" r="1.5" fill="#5a7a2a" stroke="none" stroke-width="1"/></g>
<g transform="translate(0.6 196.4) scale(1)"><circle cx="3.4" cy="6.6" r="2.9" fill="#2a62d8" stroke="none" stroke-width="1"/><circle cx="3.4" cy="6.6" r="2.9" fill="none" stroke="#9ab8f4" stroke-width="0.5"/><path d="M3.4 5 V8.4" fill="none" stroke="#fff" stroke-width="1.2" /><path d="M4.4 1.2 C7.4 1.4 9 3.4 9.2 6" fill="none" stroke="#3a6fd8" stroke-width="1.1" /><path d="M4.6 2.8 C6.4 3 7.4 4.2 7.6 6" fill="none" stroke="#3a6fd8" stroke-width="0.8" /></g>
<g transform="translate(1.2 219.6) scale(1)"><path d="M0.4 0.4 H5.6 L8 2.8 V8.6 H0.4Z" fill="#f4f8ff" stroke="#6a8ad0" stroke-width="0.8" /><circle cx="4.2" cy="5.4" r="2.3" fill="#2a9a3a" stroke="none" stroke-width="1"/><circle cx="4.2" cy="5.4" r="0.9" fill="#fff" stroke="none" stroke-width="1"/></g>
<g transform="translate(1 242) scale(1)"><circle cx="4.4" cy="4.4" r="4" fill="#f4f6fb" stroke="#7a8ab0" stroke-width="1"/><path d="M4.4 2.2 V4.6 H6.4" fill="none" stroke="#1f2f7a" stroke-width="1" /></g>
<g transform="translate(0.8 259.6) scale(1)"><path d="M1.6 0 L3.4 0 L4 8.8 L0.8 8.8Z" fill="#3ac83a" stroke="none" stroke-width="1" /><rect x="1.6" y="0" width="1.8" height="1.8" fill="#e83a2a" stroke="none" stroke-width="1" rx="0"/><rect x="1.2" y="3.6" width="2.6" height="1.8" fill="#e8e02a" stroke="none" stroke-width="1" rx="0"/><rect x="1" y="7" width="3" height="1.8" fill="#2a52e8" stroke="none" stroke-width="1" rx="0"/><path d="M4.6 3.4 L8 8.2" fill="none" stroke="#111" stroke-width="1.3" /></g>
<g transform="translate(0.6 277) scale(1)"><path d="M2.2 0.4 L3.6 0.4 L4.4 9 H1.4Z" fill="#3a7ae8" stroke="none" stroke-width="1" /><path d="M5 3.6 L8.6 0.6 L7.8 5.6" fill="none" stroke="#111" stroke-width="1.3" /></g>
<g transform="translate(1 294.6) scale(1)"><path d="M2 2.6 L6 0.6" fill="none" stroke="#555" stroke-width="0.9" /><circle cx="6.6" cy="1.4" r="1" fill="#333" stroke="none" stroke-width="1"/><path d="M0.6 5.6 L4 7.6 L0.6 9.6Z" fill="#e8922a" stroke="none" stroke-width="1" /><path d="M3.6 6.2 L7.6 7.6 L3.6 9Z" fill="#3a42a8" stroke="none" stroke-width="1" /></g>
<g transform="translate(15.6 85.4) scale(1)"><path d="M0.8 1.4 V6.4" fill="none" stroke="#777" stroke-width="0.7" stroke-dasharray="1 0.7"/><rect x="4.6" y="1.2" width="5.6" height="5.4" fill="#fff" stroke="#222" stroke-width="1" rx="0.8"/></g>
<rect x="17.4" y="97" width="10.4" height="6.6" fill="#ededed" />
<text x="17.8" y="102.6" font-size="5" fill="#333">描述</text>
<g transform="translate(22 108.6) scale(1)"><path d="M0 1.2 H2.4 L3 2 H6 V5.4 H0Z" fill="#f0c23a" stroke="#c99a2a" stroke-width="0.4" /></g>
<line x1="19.2" y1="111" x2="19.2" y2="118.6" stroke="#cfcfcf" stroke-width="0.6" />
<line x1="19.2" y1="112" x2="21.8" y2="112" stroke="#cfcfcf" stroke-width="0.6" />
<line x1="17" y1="121.2" x2="20" y2="121.2" stroke="#999" stroke-width="0.7" />
<g transform="translate(23 118.4) scale(1)"><rect x="0" y="0.6" width="4.4" height="4.6" fill="#fff" stroke="#999" stroke-width="0.6" rx="0"/><path d="M0.8 2.6 L2 4.4 L4.6 0" fill="none" stroke="#d02a2a" stroke-width="1.2" /></g>
<line x1="26.4" y1="125" x2="26.4" y2="190" stroke="#e2e2e2" stroke-width="0.6" stroke-dasharray="1.2 1"/>
<rect x="15.6" y="133" width="12.6" height="10" fill="#fafafa" />
<rect x="15.6" y="153" width="12.6" height="10" fill="#fafafa" />
<rect x="15.6" y="173" width="12.6" height="10" fill="#fafafa" />
<rect x="15.6" y="193" width="12.6" height="10" fill="#fafafa" />
<rect x="15.6" y="213" width="12.6" height="10" fill="#fafafa" />
<rect x="15.6" y="233" width="12.6" height="10" fill="#fafafa" />
<rect x="15.6" y="253" width="12.6" height="10" fill="#fafafa" />
<rect x="15.6" y="273" width="12.6" height="10" fill="#fafafa" />
<rect x="15.6" y="293" width="12.6" height="10" fill="#fafafa" />
<rect x="15.6" y="313" width="12.6" height="10" fill="#fafafa" />
<rect x="15.6" y="333" width="12.6" height="10" fill="#fafafa" />
<rect x="15.6" y="353" width="12.6" height="10" fill="#fafafa" />
<rect x="15.6" y="373" width="12.6" height="10" fill="#fafafa" />
<rect x="15.6" y="393" width="12.6" height="10" fill="#fafafa" />
<g transform="translate(16.4 405.6) scale(1)"><path d="M2.6 0.4 L0.6 2 L2.6 3.6" fill="none" stroke="#333" stroke-width="0.9" /><path d="M7.6 0.4 L9.6 2 L7.6 3.6" fill="none" stroke="#333" stroke-width="0.9" /></g>
<rect x="14" y="413.2" width="14.6" height="2.2" fill="#cfcfcf" />
<g transform="translate(789.6 87.6) scale(1)"><path d="M0.6 0.6 L8.6 2.2" fill="none" stroke="#c87a7a" stroke-width="0.9" /><path d="M0.6 3.4 C3 2 7 2.6 8.4 5.2 L6.4 7.4 C5.6 5.2 3 4.4 0.6 3.4Z" fill="#4a72e0" stroke="none" stroke-width="1" /></g>
<g transform="translate(790 101) scale(1)"><path d="M0.6 0.6 L6 6.4 M6 0.6 L0.6 6.4" fill="none" stroke="#222" stroke-width="0.9" /><path d="M7.2 0 V3.6" fill="none" stroke="#555" stroke-width="0.7" /><circle cx="2.6" cy="8" r="0.7" fill="#e03a6a" stroke="none" stroke-width="1"/><circle cx="7.6" cy="4.4" r="0.6" fill="#e03a6a" stroke="none" stroke-width="1"/></g>
<g transform="translate(790.4 114.6) scale(1)"><rect x="0" y="0" width="6.6" height="7.4" fill="#f0c64a" stroke="#b86aa8" stroke-width="0.9" rx="1"/><rect x="1.4" y="1.6" width="3.6" height="4" fill="#f8e08a" stroke="none" stroke-width="1" rx="0"/><path d="M4.6 5.4 L7.4 8.4" fill="none" stroke="#333" stroke-width="1.1" /></g>
<g transform="translate(790 128.4) scale(1)"><path d="M0.6 0.8 H8" fill="none" stroke="#e8a23a" stroke-width="1.2" /><path d="M4.2 0.8 V5" fill="none" stroke="#e8a23a" stroke-width="1.4" /><ellipse cx="4.4" cy="7" rx="4.2" ry="2.2" fill="#4a72e0"/></g>
<g transform="translate(790 141.6) scale(1)"><path d="M0.4 8 L3.6 4.6 L8.8 3" fill="none" stroke="#888" stroke-width="0.7" stroke-dasharray="1.2 0.8"/><path d="M1 2.4 L3.4 0.6 L5.6 2.4 M5.6 2.4 V5.4 M5.6 3.6 H9" fill="none" stroke="#e05a7a" stroke-width="0.9" /><path d="M0.8 7 L3.4 8.8" fill="none" stroke="#222" stroke-width="0.8" /></g>
<g transform="translate(789.6 156) scale(1)"><path d="M4 0 V5" fill="none" stroke="#3a52d0" stroke-width="1.1" /><path d="M4 5.2 L8.6 3" fill="none" stroke="#3a9a3a" stroke-width="0.9" /><path d="M4 5.2 L7 6.6" fill="none" stroke="#d03a3a" stroke-width="0.9" /><path d="M0 7.6 H9" fill="none" stroke="#555" stroke-width="1.1" stroke-dasharray="1 0.5"/></g>
<g transform="translate(790 169.6) scale(1)"><circle cx="4.4" cy="4.6" r="4.2" fill="#c87ad8" stroke="none" stroke-width="1"/><circle cx="3.4" cy="4" r="2.4" fill="#f4d23a" stroke="none" stroke-width="1"/><path d="M5.6 2.4 L8.2 4.6 L6 7.4" fill="none" stroke="#7a5ad0" stroke-width="1" /><path d="M3 8.6 H8" fill="none" stroke="#555" stroke-width="0.8" /></g>
<path d="M792.50 182.60 h2.99 l-1.49 1.64 z" fill="#111" stroke="none" stroke-width="1" />
<rect x="788" y="187.4" width="12" height="0.8" fill="#e6e6e6" />
<path d="M793.2 413.6 L791.4 414.8 L793.2 416Z" fill="#222" stroke="none" stroke-width="1" />
<g transform="translate(763 420) scale(1)"><path d="M0 0.6 H3 M0 2.4 H3 M0 4.2 H3 M4 0.4 V5" fill="none" stroke="#aaa" stroke-width="0.7" /></g>
<g transform="translate(772 419.6) scale(1)"><rect x="0" y="0" width="5.6" height="1.6" fill="#7a9ad8" stroke="none" stroke-width="1" rx="0"/><rect x="0.6" y="1.6" width="4.4" height="3.8" fill="#c9d6ee" stroke="none" stroke-width="1" rx="0"/></g>
<g transform="translate(0 0) scale(1)"><rect x="49" y="379.8" width="9.6" height="10.6" fill="#dedede" stroke="#c9c9c9" stroke-width="0.4" rx="0"/><path d="M59.6 391 V374.6" fill="none" stroke="#2e9a3a" stroke-width="1.1" /><path d="M58 377 L59.6 372.6 L61.2 377Z" fill="#2e9a3a" stroke="none" stroke-width="1" /><path d="M59.6 391 H44.6" fill="none" stroke="#2a3fd0" stroke-width="1.1" /><path d="M46.6 389.6 L42.4 391 L46.6 392.4Z" fill="#2a3fd0" stroke="none" stroke-width="1" /><circle cx="59.6" cy="391" r="1.5" fill="#c01f1f" stroke="none" stroke-width="1"/></g>
<g transform="translate(38 393) skewX(-12)"><text x="0" y="0" font-size="5.6" font-weight="bold" fill="#2a3fd0">Z</text></g>
</svg>
</body></html>
